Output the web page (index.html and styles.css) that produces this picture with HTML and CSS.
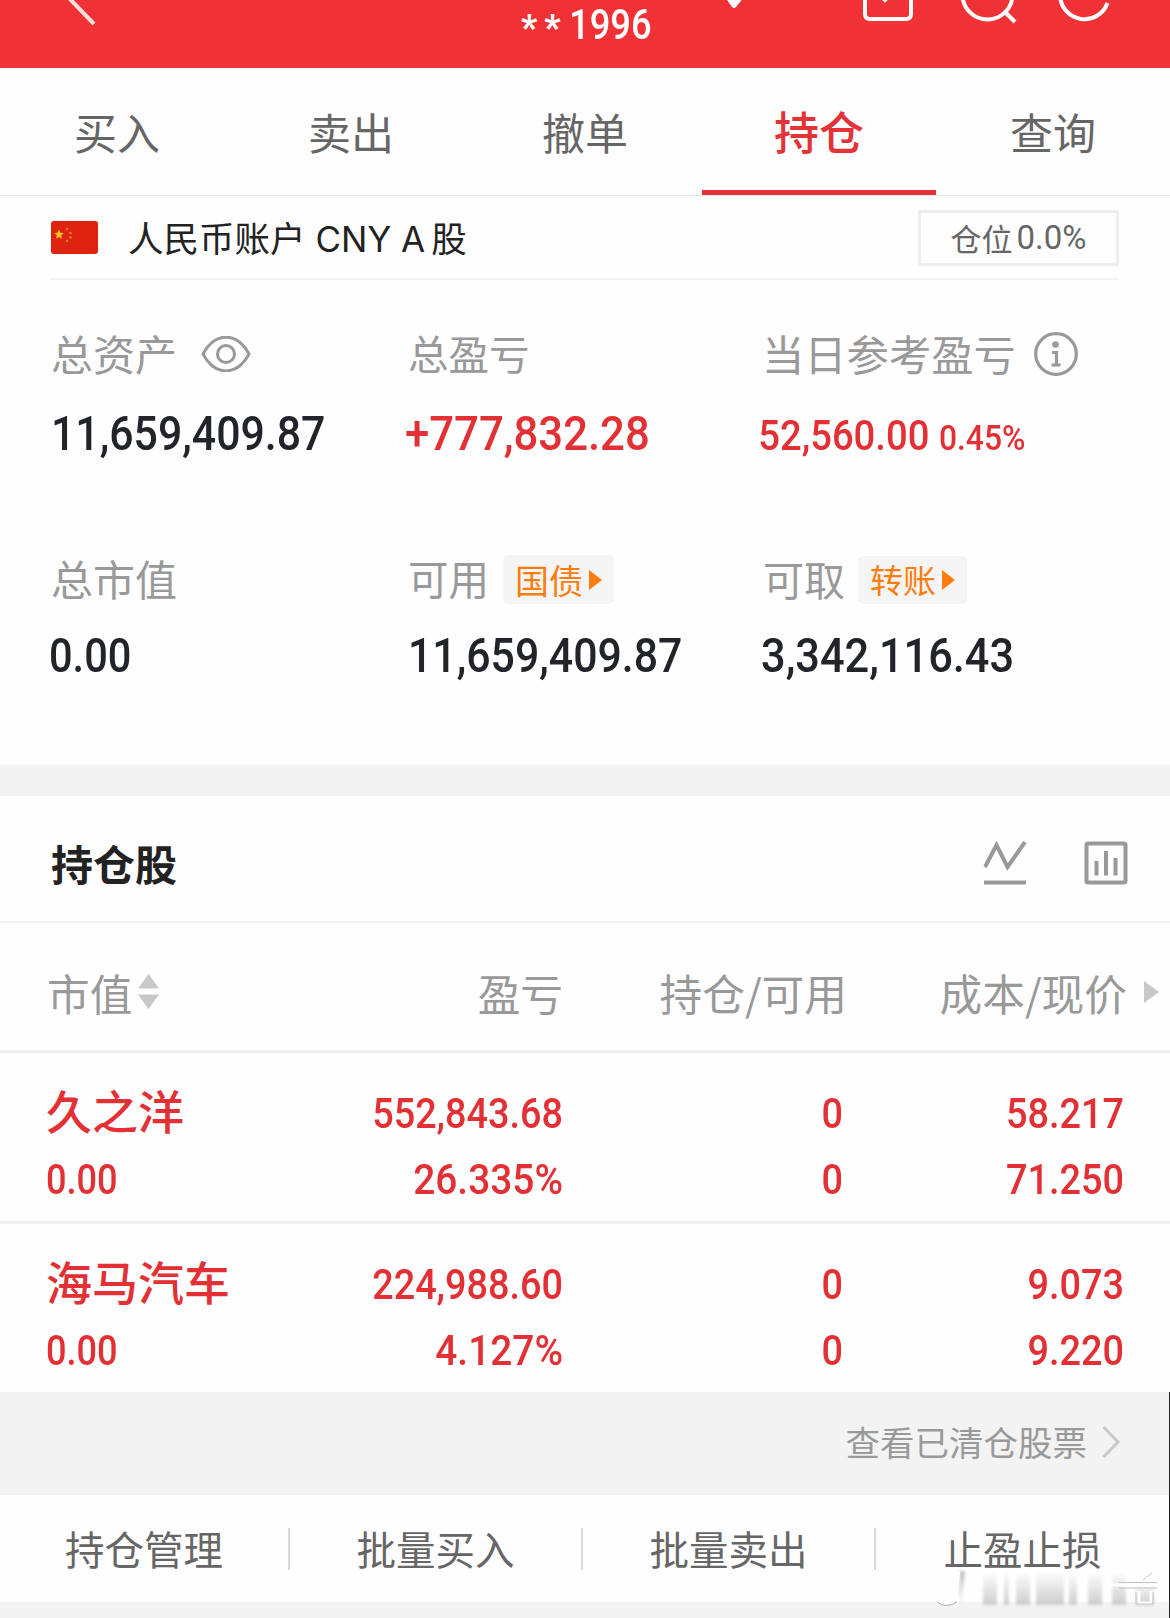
FILE: index.html
```html
<!DOCTYPE html>
<html lang="zh-CN">
<head>
<meta charset="utf-8">
<title>持仓</title>
<link rel="stylesheet" href="styles.css">
</head>
<body>
<div class="app">
  <header class="topbar">
    <svg class="topbar-icons" width="1170" height="68" viewBox="0 0 1170 68" fill="none" stroke="#fff" stroke-width="4">
      <path d="M68-3 94 24" stroke="#ffdede"/>
      <path d="M725-3h19l-8 10q-2 2-4 0z" fill="#fff" stroke="none"/>
      <path d="M865-5V14q0 5 5 5h36q5 0 5-5V-5M883-2l2 2 2-2"/>
      <circle cx="987.500" cy="-5.500" r="25"/><path d="M1005 12l10 10"/>
      <path d="M1060-4A24.500 24.500 0 0 0 1107.500 3"/>
    </svg>
    <div class="account-no"><span class="stars">**</span><span class="digits">1996</span></div>
  </header>

  <nav class="tabs">
    <div class="tab">买入</div>
    <div class="tab">卖出</div>
    <div class="tab">撤单</div>
    <div class="tab active">持仓</div>
    <div class="tab">查询</div>
  </nav>

  <section class="account">
    <svg class="flag" width="47" height="33" viewBox="0 0 47 33">
      <rect width="47" height="33" rx="3" fill="#de2410"/>
      <path d="M8 8.500l1.400 3.200 3.400.3-2.600 2.300.8 3.400-3-1.800-3 1.800.8-3.400-2.600-2.300 3.400-.3z" fill="#ffc61e"/>
      <g fill="#f0792a"><circle cx="16" cy="8" r="1.300"/><circle cx="19.500" cy="12" r="1.300"/><circle cx="19.500" cy="16.500" r="1.300"/><circle cx="16" cy="20" r="1.300"/></g>
    </svg>
    <div class="account-name">人民币账户 <span class="latin">CNY</span> <span class="latin">A</span><span class="gu">股</span></div>
    <div class="position">仓位<span class="pct">0.0%</span></div>
  </section>

  <section class="summary">
    <div class="cell">
      <div class="label">总资产
        <svg class="eye" width="50" height="36" viewBox="0 0 50 36" fill="none" stroke="#999" stroke-width="3"><path d="M2 18C14-4.500 36-4.500 48 18 36 40.500 14 40.500 2 18z"/><circle cx="25" cy="18" r="8.500"/></svg>
      </div>
      <div class="value"><span class="num total">11,659,409.87</span></div>
    </div>
    <div class="cell">
      <div class="label small">总盈亏</div>
      <div class="value up"><span class="num plus">+777,832.28</span></div>
    </div>
    <div class="cell">
      <div class="label today">当日参考盈亏
        <svg class="info" width="46" height="46" viewBox="0 0 46 46" fill="none" stroke="#999" stroke-width="3.200"><circle cx="23" cy="23" r="20.300"/><circle cx="22.500" cy="13.500" r="3.300" fill="#999" stroke="none"/><path d="M19 21.500h4.500V34M18.500 34h9"/></svg>
      </div>
      <div class="value up daily"><span class="num">52,560.00 <span class="rate">0.45%</span></span></div>
    </div>
    <div class="cell">
      <div class="label">总市值</div>
      <div class="value"><span class="num zero">0.00</span></div>
    </div>
    <div class="cell">
      <div class="label small">可用<span class="chip">国债<svg width="13" height="20" viewBox="0 0 13 20"><path d="M0 0 13 10 0 20z" fill="#ff7d0f"/></svg></span></div>
      <div class="value"><span class="num total">11,659,409.87</span></div>
    </div>
    <div class="cell">
      <div class="label mid">可取<span class="chip transfer">转账<svg width="13" height="20" viewBox="0 0 13 20"><path d="M0 0 13 10 0 20z" fill="#ff7d0f"/></svg></span></div>
      <div class="value"><span class="num cash">3,342,116.43</span></div>
    </div>
  </section>

  <section class="holdings">
    <div class="section-head">
      <h2>持仓股</h2>
      <svg width="44" height="44" viewBox="0 0 44 44" fill="none" stroke="#999" stroke-width="4"><path d="M2 26 13.500 4 24.500 26 42 1M1 41.500h42"/></svg>
      <svg width="44" height="44" viewBox="0 0 44 44" fill="none" stroke="#999" stroke-width="4"><rect x="2.500" y="2.500" width="39" height="39" rx="1.500"/><path d="M12.500 20v14.500M22 10v24.500M31.500 17v17.500"/></svg>
    </div>
    <div class="row table-head">
      <div class="col">市值<svg class="sort" width="21" height="35" viewBox="0 0 21 35" fill="#c8c8c8"><path d="M0 14.500 10.500 0 21 14.500zM0 20.500h21L10.500 35z"/></svg></div>
      <div class="col">盈亏</div>
      <div class="col">持仓/可用</div>
      <div class="col">成本/现价</div>
      <svg class="more" width="15" height="22" viewBox="0 0 15 22"><path d="M0 0 15 11 0 22z" fill="#c8c8c8"/></svg>
    </div>
    <div class="row stock">
      <div class="col"><div class="name">久之洋</div><div class="n">0.00</div></div>
      <div class="col"><div class="n">552,843.68</div><div class="n percent">26.335%</div></div>
      <div class="col"><div class="n">0</div><div class="n">0</div></div>
      <div class="col"><div class="n">58.217</div><div class="n">71.250</div></div>
    </div>
    <div class="row stock">
      <div class="col"><div class="name">海马汽车</div><div class="n">0.00</div></div>
      <div class="col"><div class="n">224,988.60</div><div class="n percent">4.127%</div></div>
      <div class="col"><div class="n">0</div><div class="n">0</div></div>
      <div class="col"><div class="n">9.073</div><div class="n">9.220</div></div>
    </div>
  </section>

  <div class="bottom">
    <div class="cleared">查看已清仓股票
      <svg width="18" height="34" viewBox="0 0 18 34" fill="none" stroke="#c8c8c8" stroke-width="3"><path d="M1.500 2 16 17 1.500 32"/></svg>
    </div>
    <div class="actions">
      <div class="action">持仓管理</div>
      <div class="action">批量买入</div>
      <div class="action">批量卖出</div>
      <div class="action">止盈止损</div>
    </div>
    <svg class="mark" width="240" height="44" viewBox="0 0 240 44">
      <defs>
        <linearGradient id="fade" x1="0" y1="0" x2="0" y2="1"><stop offset="0" stop-color="#c4c4c4" stop-opacity="0"/><stop offset="1" stop-color="#c4c4c4" stop-opacity=".85"/></linearGradient>
        <linearGradient id="handle" x1="0" y1="0" x2="0" y2="1"><stop offset="0" stop-color="#aaa" stop-opacity=".8"/><stop offset="1" stop-color="#aaa" stop-opacity="0"/></linearGradient>
        <filter id="soft" x="-10%" y="-10%" width="120%" height="120%"><feGaussianBlur stdDeviation="1.500"/></filter>
      </defs>
      <g filter="url(#soft)">
        <rect x="2" y="4" width="225" height="28" fill="#fefefe"/>
        <path d="M31 3h5l-3 32h-4z" fill="url(#handle)"/>
        <g fill="url(#fade)"><rect x="54" y="4" width="14" height="33"/><rect x="75" y="4" width="5" height="33"/><rect x="87" y="4" width="14" height="33"/><rect x="107" y="3" width="28" height="34"/><rect x="140" y="4" width="8" height="33"/><rect x="159" y="4" width="14" height="33"/><rect x="183" y="4" width="14" height="33"/><rect x="207" y="14" width="18" height="23"/></g>
      </g>
      <path d="M7 4 8 34q9 6 20 0L31 4z" fill="#fefefe"/>
      <path d="M8 34q9 7 20 0" fill="none" stroke="#aaa"/>
      <path d="M180 17h47M206 11h18M210 23v12h12V23" fill="none" stroke="#fefefe" stroke-width="3"/>
      <path d="M190 14.500h38M190 20h38M214 12l9-7M207 24v12h17V24" fill="none" stroke="#c4c4c4"/>
    </svg>
  </div>
</div>
</body>
</html>
```
FILE: styles.css
```css
* { box-sizing: border-box; }
body {
  margin: 0;
  background: #fefefe;
  font-family: "Noto Sans CJK SC", sans-serif;
  color: #222;
}
svg { display: block; flex: none; }
.app { width: 1170px; height: 1618px; overflow: hidden; display: flex; flex-direction: column; }

.topbar { position: relative; height: 68px; flex: none; background: #f03135; overflow: hidden; }
.topbar-icons { position: absolute; inset: 0; }
.account-no {
  display: flex; padding-left: 521px; height: 48px; color: #fff;
  font-family: Roboto, sans-serif; font-size: 42px; line-height: 50px;
}
.stars { width: 48px; letter-spacing: 7px; padding-top: 3px; font-weight: 700; font-size: 36px; }
.digits { transform: scaleX(.865); transform-origin: left; font-weight: 500; }

.tabs { display: grid; grid-template-columns: repeat(5, 1fr); height: 128px; flex: none; border-bottom: 1px solid #e6e6e6; }
.tab { text-align: center; font-size: 43px; line-height: 126px; height: 127px; color: #666; }
.tab.active { color: #e33338; border-bottom: 5px solid #e33338; font-size: 45px; font-weight: 500; }

.account {
  display: flex; align-items: center; flex: none;
  height: 84px; margin: 0 51px 0 50px; border-bottom: 2px solid #f3f3f3;
}
.flag { margin-left: 1px; }
.account-name { margin-left: 30px; margin-top: 2px; font-size: 35.500px; line-height: 60px; white-space: pre; flex: 1; }
.latin { font-family: Inter, sans-serif; font-size: 35px; margin-left: 2px; }
.gu { margin-left: 6px; }
.position {
  width: 201px; height: 56px; margin-top: 2px; border: 3px solid #eee;
  display: flex; align-items: center; justify-content: center;
  font-size: 31px; line-height: 50px; color: #666;
}
.pct { font-family: Roboto, sans-serif; font-size: 33px; margin-left: 4px; }

.summary {
  display: grid; grid-template-columns: 357px 354px 1fr; grid-template-rows: 225px 217px;
  height: 485px; flex: none; padding: 43px 0 0 51px;
}
.label { display: flex; align-items: center; height: 60px; font-size: 42px; line-height: 60px; color: #999; }
.label.small { font-size: 40.500px; }
.label.mid { font-size: 41px; padding-left: 1px; }
.label.today { font-size: 42.300px; }
.eye { margin-left: 24px; margin-top: 2px; }
.info { margin-left: 17px; margin-top: 2px; }
.value { height: 60px; margin-top: 21px; font-family: Roboto, sans-serif; font-size: 48px; line-height: 60px; font-weight: 500; color: #212429; white-space: nowrap; }
.cell:nth-child(n+4) .value { margin-top: 18px; }
.num { display: inline-block; transform: scaleX(.91); transform-origin: left; }
.total { transform: scaleX(.892); }
.zero { transform: scaleX(.865); margin-left: -2px; }
.plus { margin-left: -3px; }
.cash { transform: scaleX(.903); margin-left: -1px; }
.value.up { color: #e33034; }
.daily { font-size: 42px; padding-top: 2px; text-indent: -2px; }
.rate { font-size: 35px; }
.chip {
  display: flex; align-items: center; height: 49px; margin: 3px 0 0 14px; padding: 0 12px;
  border-radius: 5px; background: #f5f5f5; color: #ff7d0f; font-size: 34px; line-height: 47px; gap: 6px;
}
.transfer { height: 48px; margin-left: 13px; font-size: 33px; }

.holdings { flex: none; border-top: 31px solid #f3f3f3; }
.section-head { height: 127px; display: flex; align-items: center; padding: 8px 42px 0 51px; border-bottom: 2px solid #f2f2f2; }
.section-head h2 { margin: 0; flex: 1; font-size: 42px; line-height: 60px; font-weight: 700; }
.section-head svg + svg { margin-left: 57px; }
.row { display: grid; grid-template-columns: 262px 254px 284px 280px 1fr; padding-left: 47px; border-bottom: 3px solid #f0f0f0; }
.col { text-align: right; }
.col:first-child { text-align: left; }
.table-head { height: 130px; align-items: center; font-size: 42.700px; line-height: 60px; color: #999; padding-top: 10px; }
.table-head .col:first-child { display: flex; align-items: center; }
.sort { margin-left: 6px; }
.more { margin-left: 17px; }
.stock { height: 171px; padding-top: 28px; color: #e33034; }
.stock:last-child { height: 168px; border-bottom: 0; }
.name { font-size: 46px; line-height: 66px; height: 66px; font-weight: 500; margin: -5px 0 5px -1px; white-space: nowrap; }
.n { font-family: Roboto, sans-serif; font-size: 42px; line-height: 66px; font-weight: 500; transform: scaleX(.9); transform-origin: right; }
.n.percent { transform: scaleX(.925); }
.col:first-child .n { transform: scaleX(.86); transform-origin: left; margin-left: -1px; }
.stock .col:nth-child(3) { padding-right: 4px; }
.stock .col:nth-child(4) { padding-right: 3px; }

.bottom { position: relative; flex: 1; background: #f3f3f3; border-right: 1px solid #222; }
.cleared { height: 103px; display: flex; align-items: center; justify-content: flex-end; padding: 0 49px 6px 0; color: #999; font-size: 34.500px; }
.cleared svg { margin-left: 15px; margin-top: 2px; }
.actions { display: grid; grid-template-columns: 290px 293px 293px 1fr; height: 107px; align-items: center; background: #fefefe; }
.action { height: 42px; line-height: 40px; font-size: 39.500px; text-align: center; color: #666; border-right: 2px solid #d8d8d8; }
.action:last-child { border: 0; }
.mark { position: absolute; right: 0; bottom: 6px; }
```
